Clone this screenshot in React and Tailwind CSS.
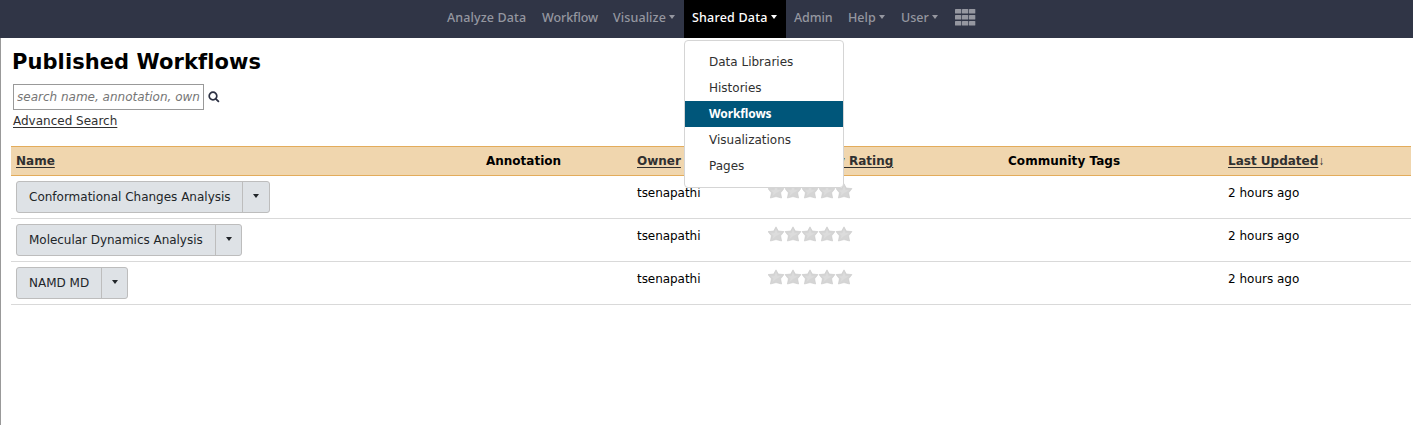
import React from "react";

function Caret({ className = "" }) {
  return (
    <span
      className={"inline-block h-0 w-0 border-x-[3.5px] border-t-4 border-x-transparent border-t-current " + className}
    />
  );
}

function NavItem({ label, caret, width, active, tracking = "" }) {
  return (
    <a
      className={
        "flex h-[38px] items-center gap-[3px] whitespace-nowrap pb-[3px] pl-2 " +
        width +
        (active ? " bg-black text-white" : " text-[#9597a0]")
      }
    >
      <span className={tracking}>{label}</span>
      {caret && <Caret className="mb-0.5" />}
    </a>
  );
}

function Star() {
  return (
    <svg width="17" height="17" viewBox="0 0 17 17" className="block">
      <path d="M8 0.8 L10.3 5 L16 5.6 L12.6 9.8 L13.6 15 L8 13.6 L2.4 15 L3.4 9.8 L0 5.6 L5.7 5 Z" fill="#d5d5d5" stroke="#c9c9c9" strokeWidth="0.6" strokeLinejoin="round" />
      <path d="M8 3 L9.4 7 L13 7.4 L8 10 L4.6 13 L5.5 9.5 L3 7.4 L6.5 7 Z" fill="#dcdcdc" />
    </svg>
  );
}

const menuItems = ["Data Libraries", "Histories", "Workflows", "Visualizations", "Pages"];
const workflows = [
  { name: "Conformational Changes Analysis", width: "w-[226px]" },
  { name: "Molecular Dynamics Analysis", width: "w-[199px] tracking-[-0.03px]" },
  { name: "NAMD MD", width: "w-[85px]" },
];
const columns = "grid grid-cols-[470px_151px_131px_240px_220px_188px]";

export default function App() {
  return (
    <div className="relative flex h-[425px] w-[1413px] flex-col overflow-hidden bg-white font-['Verdana','DejaVu_Sans',sans-serif] text-[12px] leading-[18px] text-black">
      <nav className="flex h-[38px] shrink-0 bg-[#303546] pl-[439px] font-['Noto_Sans',sans-serif] text-[12.5px] font-medium">
        <NavItem label="Analyze Data" width="w-[95px]" tracking="tracking-[0.12px]" />
        <NavItem label="Workflow" width="w-[71px]" tracking="tracking-[-0.1px]" />
        <NavItem label="Visualize" width="w-[79px]" tracking="tracking-[0.1px]" caret />
        <NavItem label="Shared Data" width="w-[102px]" tracking="tracking-[0.2px]" caret active />
        <NavItem label="Admin" width="w-[54px]" tracking="tracking-[-0.1px]" />
        <NavItem label="Help" width="w-[53px]" caret />
        <NavItem label="User" width="w-[54px]" caret />
        <svg width="21" height="17" viewBox="0 0 21 17" className="ml-2 mt-[9px]" fill="#9597a0">
          {[0, 7, 14].map((x) => [0, 6, 12].map((y) => <rect key={x + "-" + y} x={x} y={y} width="6.3" height="4.5" rx="0.6" />))}
        </svg>
      </nav>

      <main className="flex-1 border-l border-[#999999] pl-[10px]">
        <h1 className="h-[46px] pl-[1px] pt-[10px] text-[21px] font-bold leading-[28px] tracking-[0.08px]">Published Workflows</h1>
        <div className="flex h-[26px] items-center pl-[2px]">
          <input
            className="h-[26px] w-[191px] border border-[#999999] px-[3px] text-[12px] italic placeholder:text-[#757575]"
            placeholder="search name, annotation, owner, and tags"
          />
          <svg width="12" height="12" viewBox="0 0 12 12" className="ml-1" fill="none" stroke="#2c3143">
            <circle cx="5" cy="5" r="3.8" strokeWidth="1.7" />
            <path d="M7.8 7.8 L10.4 10.4" strokeWidth="1.8" strokeLinecap="round" />
          </svg>
        </div>
        <div className="h-9 pl-[2px] pt-[2px]">
          <a className="text-[#303030] underline underline-offset-2">Advanced Search</a>
        </div>

        <section className="w-[1400px]">
          <div className={columns + " h-[30px] border-y border-[#e3ac5b] bg-[#f0d6ae] font-bold leading-[28px] *:whitespace-nowrap *:pl-[5px]"}>
            <div className="text-[#303030] underline underline-offset-2">Name</div>
            <div>Annotation</div>
            <div className="text-[#303030] underline underline-offset-2">Owner</div>
            <div className="text-[#303030] underline underline-offset-2">Community Rating</div>
            <div className="tracking-[0.05px]">Community Tags</div>
            <div className="text-[#303030]">
              <span className="underline underline-offset-2">Last Updated</span>
              <span className="font-['Liberation_Sans',sans-serif] font-normal">↓</span>
            </div>
          </div>
          {workflows.map((w) => (
            <div key={w.name} className={columns + " h-[43px] border-b border-[#d9d9d9] *:pl-[5px]"}>
              <div className="pt-[5px]">
                <div className="flex h-8 w-fit overflow-hidden rounded-[3px] border border-[#bdbdbd] bg-[#dee2e6] text-[#212529]">
                  <span className={"whitespace-nowrap border-r border-[#bdbdbd] pl-3 leading-[31px] " + w.width}>{w.name}</span>
                  <span className={"flex items-center justify-center pb-0.5 " + (w.name.startsWith("Conf") ? "w-[26px]" : "w-[25px]")}>
                    <Caret />
                  </span>
                </div>
              </div>
              <div />
              <div className="pt-2 tracking-[-0.05px]">tsenapathi</div>
              <div className="flex pt-[7px]">
                {[0, 1, 2, 3, 4].map((i) => (
                  <Star key={i} />
                ))}
              </div>
              <div />
              <div className="pt-2">2 hours ago</div>
            </div>
          ))}
        </section>
      </main>

      <div className="absolute left-[684px] top-[40px] h-[148px] w-[160px] rounded-[4px] border border-[#d5d5d5] bg-white py-2 text-[#303030]">
        {menuItems.map((m) => (
          <div
            key={m}
            className={
              "h-[26px] pl-6 leading-[26px] " +
              (m === "Workflows" ? "bg-[#00567a] font-['Noto_Sans',sans-serif] font-bold tracking-[-0.1px] text-white" : "")
            }
          >
            {m}
          </div>
        ))}
      </div>
    </div>
  );
}
